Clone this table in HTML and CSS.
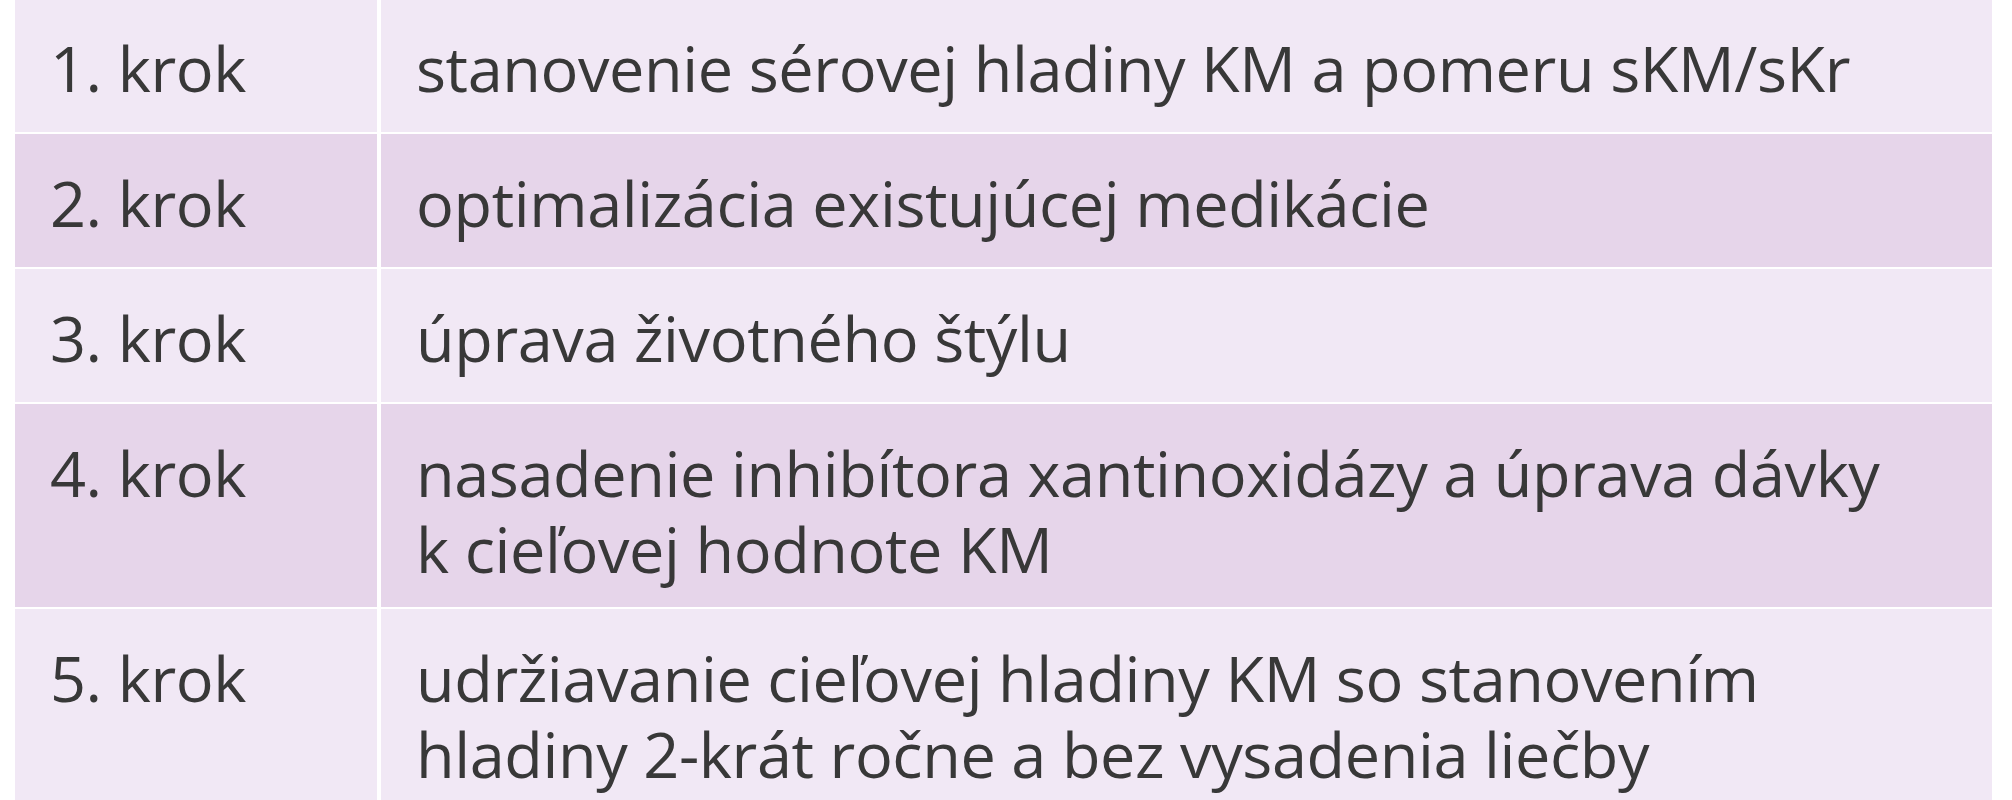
FILE: index.html
```html
<!DOCTYPE html>
<html lang="sk">
<head>
<meta charset="utf-8">
<title>Kroky liečby</title>
<link rel="stylesheet" href="styles.css">
</head>
<body>
<table class="steps">
  <tbody>
    <tr class="row-light">
      <td class="step">1. krok</td>
      <td class="desc">stanovenie sérovej hladiny KM a pomeru sKM/sKr</td>
    </tr>
    <tr class="row-dark">
      <td class="step">2. krok</td>
      <td class="desc">optimalizácia existujúcej medikácie</td>
    </tr>
    <tr class="row-light">
      <td class="step">3. krok</td>
      <td class="desc">úprava životného štýlu</td>
    </tr>
    <tr class="row-dark">
      <td class="step">4. krok</td>
      <td class="desc">nasadenie inhibítora xantinoxidázy a úprava dávky<br>k cieľovej hodnote KM</td>
    </tr>
    <tr class="row-light">
      <td class="step">5. krok</td>
      <td class="desc">udržiavanie cieľovej hladiny KM so stanovením<br>hladiny 2-krát ročne a bez vysadenia liečby</td>
    </tr>
  </tbody>
</table>
</body>
</html>
```

FILE: styles.css
```css
html, body {
  margin: 0;
  padding: 0;
  background: #ffffff;
}

body {
  font-family: "Open Sans", "DejaVu Sans", sans-serif;
  color: #383838;
  overflow: hidden;
}

.steps {
  margin: -3px 0 0 11px;
  width: 1985px;
  border-collapse: separate;
  border-spacing: 4px 2px;
  font-size: 63px;
  letter-spacing: -0.4px;
  line-height: 76px;
}

.steps tr {
  height: 133px;
}

.steps td {
  vertical-align: top;
  padding: 31px 39px 20px 35px;
  box-sizing: border-box;
  white-space: nowrap;
}

.step {
  width: 362px;
}

.row-light td {
  background: #f1e8f5;
}

.row-dark td {
  background: #e6d5ea;
}
```
